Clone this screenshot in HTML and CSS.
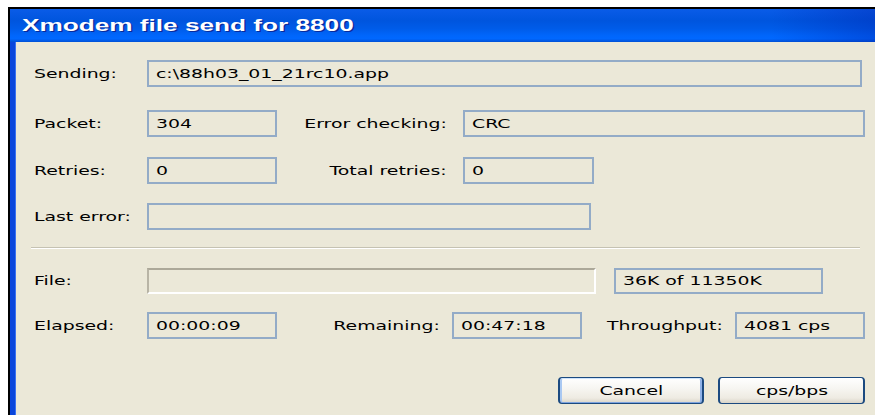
FILE: index.html
```html
<!DOCTYPE html>
<html lang="en">
<head>
<meta charset="utf-8">
<title>Xmodem file send for 8800</title>
<link rel="stylesheet" href="styles.css">
</head>
<body>
<div class="screen">
  <div class="window">
    <div class="titlebar"><span class="title">Xmodem file send for 8800</span></div>
    <div class="body">
      <div class="row row-sending">
        <div class="lbl"><span class="t">Sending:</span></div>
        <div class="field w-sending"><span class="t">c:\88h03_01_21rc10.app</span></div>
      </div>
      <div class="row row-packet">
        <div class="lbl"><span class="t">Packet:</span></div>
        <div class="field w-small"><span class="t">304</span></div>
        <div class="lbl-r w-mid"><span class="t">Error checking:</span></div>
        <div class="field w-crc"><span class="t">CRC</span></div>
      </div>
      <div class="row row-retries">
        <div class="lbl"><span class="t">Retries:</span></div>
        <div class="field w-small"><span class="t">0</span></div>
        <div class="lbl-r w-mid"><span class="t">Total retries:</span></div>
        <div class="field w-total"><span class="t">0</span></div>
      </div>
      <div class="row row-error">
        <div class="lbl"><span class="t">Last error:</span></div>
        <div class="field w-error"></div>
      </div>
      <div class="separator"></div>
      <div class="row row-file">
        <div class="lbl"><span class="t">File:</span></div>
        <div class="progress"></div>
        <div class="field w-size"><span class="t">36K of 11350K</span></div>
      </div>
      <div class="row row-time">
        <div class="lbl"><span class="t">Elapsed:</span></div>
        <div class="field w-small"><span class="t">00:00:09</span></div>
        <div class="lbl-r w-remain"><span class="t">Remaining:</span></div>
        <div class="field w-small"><span class="t">00:47:18</span></div>
        <div class="lbl-r w-thru"><span class="t">Throughput:</span></div>
        <div class="field w-small"><span class="t">4081 cps</span></div>
      </div>
      <div class="buttons">
        <button class="btn btn-default" type="button"><span class="t">Cancel</span></button>
        <button class="btn btn-rate" type="button"><span class="t">cps/bps</span></button>
      </div>
    </div>
  </div>
</div>
</body>
</html>
```

FILE: styles.css
```css
html, body {
  margin: 0;
  padding: 0;
  background: #ffffff;
}

.screen {
  width: 875px;
  height: 415px;
  overflow: hidden;
  padding: 7px 0 0 8px;
  box-sizing: border-box;
  background: #ffffff;
}

.window {
  border-top: 2px solid #000000;
  border-left: 2px solid #000000;
  height: 100%;
  display: flex;
  flex-direction: column;
}

/* Luna-style caption bar */
.titlebar {
  height: 33px;
  flex: none;
  display: flex;
  align-items: center;
  padding-left: 12px;
  background:
    linear-gradient(to right, rgba(0, 30, 170, 0) 88%, rgba(0, 30, 170, 0.35) 100%),
    linear-gradient(to bottom, #0a5ce8 0%, #0055de 35%, #005ce9 60%, #0066fb 80%, #0068ff 90%, #0050d6 100%);
}

.title {
  display: inline-block;
  font-family: "Liberation Sans", Arial, sans-serif;
  font-weight: bold;
  font-size: 17px;
  color: #ffffff;
  text-shadow: 1px 1px 0 #0b2a9a;
  transform: scaleX(1.54);
  transform-origin: left center;
  white-space: nowrap;
}

.body {
  flex: 1;
  background: #ebe8d8;
  border-left: 5px solid #0a46dc;
  box-shadow: inset 1px 0 0 #3a72f0;
  padding: 18px 0 0 19px;
  font-family: "DejaVu Sans", Verdana, sans-serif;
  font-size: 12px;
  color: #000000;
}

/* horizontally stretched glyphs */
.t {
  display: inline-block;
  white-space: nowrap;
  transform: scaleX(1.57);
  transform-origin: left center;
}

.row {
  display: flex;
  align-items: center;
  height: 27px;
}

.row-packet { margin-top: 23px; }
.row-retries { margin-top: 20px; }
.row-error { margin-top: 19px; }
.row-file { margin-top: 19px; height: 26px; }
.row-time { margin-top: 18px; }

.lbl {
  width: 113px;
  flex: none;
}

.lbl-r {
  flex: none;
  display: flex;
  justify-content: flex-end;
  padding-right: 12px;
  box-sizing: border-box;
}

.lbl-r .t {
  transform-origin: right center;
}

.w-mid { width: 186px; padding-right: 16px; }
.w-remain { width: 175px; }
.w-thru { width: 153px; }

/* read-only edit boxes */
.field {
  flex: none;
  height: 27px;
  box-sizing: border-box;
  border: 2px solid #93abc7;
  padding-left: 7px;
  display: flex;
  align-items: center;
  background: #ebe8d8;
}

.w-sending { width: 715px; }
.w-small { width: 130px; }
.w-crc { width: 402px; }
.w-total { width: 131px; }
.w-error { width: 444px; }
.w-size { width: 209px; height: 26px; margin-left: 18px; }

/* empty progress bar well */
.progress {
  flex: none;
  width: 449px;
  height: 26px;
  box-sizing: border-box;
  border-top: 2px solid #aca899;
  border-left: 2px solid #b8b4a5;
  border-bottom: 2px solid #ffffff;
  border-right: 2px solid #ffffff;
}

.separator {
  margin: 17px 0 0 -3px;
  width: 829px;
  height: 1px;
  background: #c5c2b2;
  border-bottom: 1px solid #ffffff;
}

.buttons {
  display: flex;
  gap: 14px;
  margin: 38px 0 0 524px;
}

.btn {
  height: 27px;
  box-sizing: border-box;
  border: 1px solid #1b4a80;
  border-left-width: 2px;
  border-right-width: 2px;
  border-radius: 4px;
  background: linear-gradient(to bottom, #ffffff 0%, #f7f6f2 40%, #eeebe2 80%, #d9d4c8 100%);
  font-family: "DejaVu Sans", Verdana, sans-serif;
  font-size: 12px;
  color: #000000;
  padding: 0;
  display: flex;
  align-items: center;
  justify-content: center;
}

.btn .t {
  transform-origin: center center;
}

.btn-default {
  width: 146px;
  box-shadow: inset 0 1px 0 #cee3fb, inset 0 -1px 0 #7ea4de, inset 2px 0 0 #a9c8f2, inset -2px 0 0 #8fb2e8;
}

.btn-rate {
  width: 147px;
}
```
